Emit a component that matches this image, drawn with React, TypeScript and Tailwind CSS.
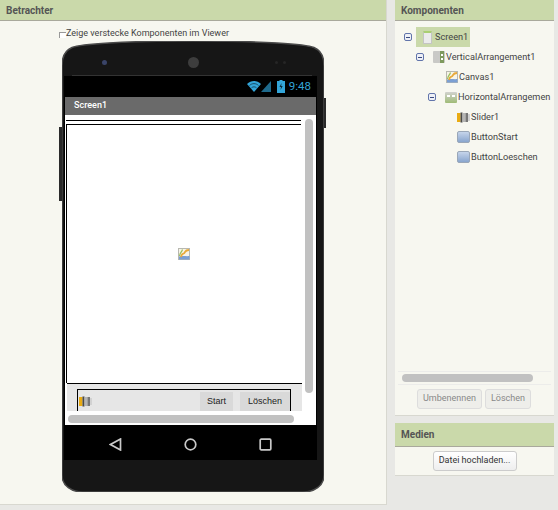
import React from "react";

const font = { fontFamily: '"Roboto","Liberation Sans",sans-serif' };
const arial = { fontFamily: '"Liberation Sans",Arial,sans-serif' };

function Minus() {
  return (
    <span className="flex h-[8px] w-[8px] items-center justify-center rounded-[2px] border border-[#6275ab] bg-[#eef0f6]">
      <span className="h-px w-[4px] bg-[#3a4a80]" />
    </span>
  );
}

function ButtonIcon() {
  return (
    <svg width="13" height="12" viewBox="0 0 13 12">
      <defs>
        <linearGradient id="bt" x1="0" y1="0" x2="0" y2="1">
          <stop offset="0" stopColor="#c9d7ec" />
          <stop offset="1" stopColor="#86a3cc" />
        </linearGradient>
      </defs>
      <rect x="0.5" y="0.5" width="12" height="11" rx="1.5" fill="url(#bt)" stroke="#9aa7b8" />
    </svg>
  );
}

function SliderIcon() {
  return (
    <svg width="13" height="11" viewBox="0 0 13 11">
      <rect x="0" y="1" width="3.5" height="9" fill="#e9ab12" />
      <rect x="3.5" y="0.5" width="2" height="10" fill="#4a4a4a" />
      <rect x="5.5" y="1" width="3" height="9" fill="#b5b5b5" />
      <rect x="8.5" y="1" width="2.5" height="9" fill="#777" />
      <rect x="11" y="2" width="2" height="7" fill="#d2d2d2" />
    </svg>
  );
}

function CanvasIcon() {
  return (
    <svg width="12" height="12" viewBox="0 0 12 12">
      <rect x="0.5" y="0.5" width="11" height="11" fill="#f7f4e8" stroke="#b8b8b0" />
      <path d="M1 11.5 V8.5 C5 7.5 8 8.5 11.5 8 V11.5Z" fill="#7b9fd3" />
      <path d="M3 9 C4 4 6 7 7 4 C8 2 9 2 11 2" fill="none" stroke="#e8a93a" strokeWidth="1.8" />
      <path d="M1.5 8 C2.5 3 3.5 5 4.5 1.5" fill="none" stroke="#9bbf5a" strokeWidth="1.2" />
    </svg>
  );
}

function ScreenIcon() {
  return (
    <span className="block h-[13px] w-[9px] rounded-[1px] border border-[#c4c4c4] border-t-[2px] border-t-[#a9cf72] bg-[#ebebeb]" />
  );
}

function VerticalIcon() {
  return (
    <span className="flex h-[12px] w-[12px] items-center justify-end rounded-[1px] bg-[#c9c9c6] pr-[1px]">
      <span className="flex h-full w-[4px] flex-col items-center justify-center gap-[2px] bg-[#7f9a5e]">
        <span className="h-[2px] w-[2px] bg-white" />
        <span className="h-[2px] w-[2px] bg-white" />
      </span>
    </span>
  );
}

function HorizontalIcon() {
  return (
    <span className="flex h-[11px] w-[12px] items-start justify-center gap-[2px] rounded-[1px] bg-gradient-to-b from-[#d2d2cf] to-[#9fbb76] pt-[3px]">
      <span className="h-[2px] w-[3px] bg-white" />
      <span className="h-[2px] w-[3px] bg-white" />
    </span>
  );
}

function Row({ indent, icon, label, minus }: { indent: number; icon: React.ReactNode; label: string; minus?: boolean }) {
  return (
    <div className="flex h-5 items-center whitespace-nowrap" style={{ paddingLeft: indent }}>
      <span className="flex w-[17px] shrink-0">{minus ? <Minus /> : null}</span>
      <span className="flex shrink-0">{icon}</span>
      <span className="ml-px text-[9.2px] leading-none text-[#444]">{label}</span>
    </div>
  );
}

function Header({ children, tall }: { children: React.ReactNode; tall?: boolean }) {
  return (
    <div
      className={`flex shrink-0 items-center border-b border-[#a9a99c] bg-[#cad9aa] pl-[6px] text-[10px] font-bold text-[#555] ${
        tall ? "h-[24px]" : "h-[21px]"
      }`}
    >
      {children}
    </div>
  );
}

function PhoneBody() {
  return (
    <svg className="absolute inset-0" width="262" height="451" viewBox="0 0 262 451">
      <path
        d="M0 25 C0 14 4 9 10 6.5 C18 3 60 0 131 0 C202 0 244 3 252 6.5 C258 9 262 14 262 25 V434 C262 445 252 451 241 451 H21 C10 451 0 445 0 434Z"
        fill="#161616"
        stroke="#4a4a4a"
        strokeWidth="1.5"
      />
      <path d="M10 34.5 H250" stroke="#333" strokeWidth="1" />
    </svg>
  );
}

function Phone() {
  return (
    <div className="relative flex h-[451px] w-[262px] flex-col">
      <PhoneBody />
      <div className="absolute top-[57px] right-[-2px] h-[30px] w-[2px] bg-[#2a2a2a]" />
      <div className="absolute top-[86px] left-[-3px] h-[74px] w-[3px] bg-[#2a2a2a]" />
      <div className="relative flex h-[35px] shrink-0 items-center pl-[40px]">
        <span className="mt-[7px] h-[5px] w-[5px] rounded-full bg-[#3a4468]" />
        <span className="ml-[81px] mt-[7px] h-[11px] w-[11px] rounded-full bg-[#3d3d3d]" />
        <span className="ml-[76px] mt-[7px] h-[3px] w-[3px] rounded-full bg-[#262626]" />
        <span className="ml-[5px] mt-[7px] h-[3px] w-[3px] rounded-full bg-[#262626]" />
      </div>
      <div className="relative ml-[2px] flex w-[253px] flex-col bg-black">
        <div className="flex h-[21px] items-center justify-end pr-[6px] text-[#33a5d9]">
          <svg width="25" height="13" viewBox="0 0 25 13">
            <path d="M0 4 C4 0 10 0 14 4 L7 12Z" fill="#33a5d9" />
            <path d="M2.5 5.5 C5 3 9 3 11.5 5.5" fill="none" stroke="#0b2a38" strokeWidth="0.7" />
            <path d="M4.5 7.8 C6 6.5 8 6.5 9.5 7.8" fill="none" stroke="#0b2a38" strokeWidth="0.7" />
            <path d="M24 1 V12 H14Z" fill="#1f6a8c" />
          </svg>
          <svg className="ml-[5px]" width="8" height="13" viewBox="0 0 8 13">
            <path d="M2.5 0 H5.5 V1 H8 V13 H0 V1 H2.5Z" fill="#33a5d9" />
            <path d="M4.5 3 L2.5 7 H4 L3.5 10 L5.7 6 H4.2Z" fill="#0b2a38" />
          </svg>
          <span className="ml-[4px] text-[11.5px] leading-none">9:48</span>
        </div>
        <div className="mx-[1px] flex h-[18px] items-center bg-[#6a6a6a] pl-[9px] text-[9px] font-medium text-white">Screen1</div>
        <div className="relative mx-[1px] flex h-[310px] flex-col bg-white pt-[5px] pl-[1px]">
          <div className="h-px w-[235px] bg-black" />
          <div className="mt-[3px] h-px w-[235px] bg-black" />
          <div className="flex h-[258px] w-[234px] items-center justify-center border-l border-black">
            <CanvasIcon />
          </div>
          <div className="ml-[1px] h-[28px] w-[235px] border-t border-black bg-[#e6e6e6] pt-[5px] pl-[10px]" style={arial}>
            <div className="flex h-[22px] w-[214px] items-start justify-between border-x border-t border-black pl-[1px]">
              <span className="mt-[6px] flex"><SliderIcon /></span>
              <div className="flex h-[21px] items-end gap-[7px]">
                <span className="flex h-[19px] w-[33px] items-center justify-center bg-[#d9d9d9] text-[9px] text-[#222]">Start</span>
                <span className="flex h-[19px] w-[50px] items-center justify-center bg-[#d9d9d9] text-[9px] text-[#222]">Löschen</span>
              </div>
            </div>
          </div>
          <div className="absolute top-[4px] right-[3px] h-[274px] w-[8px] rounded-full bg-[#c1c1c1]" />
          <div className="absolute bottom-[2px] left-[3px] h-[8px] w-[226px] rounded-full bg-[#c1c1c1]" />
        </div>
        <div className="flex h-[35px] items-center pl-[45px] pt-[3px]">
          <svg width="13" height="13" viewBox="0 0 13 13"><path d="M11.5 1 V12 L1.5 6.5Z" fill="none" stroke="#c9c9c9" strokeWidth="1.7" /></svg>
          <svg className="ml-[62px]" width="13" height="13" viewBox="0 0 13 13"><circle cx="6.5" cy="6.5" r="5.3" fill="none" stroke="#c9c9c9" strokeWidth="1.7" /></svg>
          <svg className="ml-[62px]" width="13" height="13" viewBox="0 0 13 13"><rect x="1.2" y="1.2" width="10.6" height="10.6" rx="1" fill="none" stroke="#c9c9c9" strokeWidth="1.7" /></svg>
        </div>
      </div>
    </div>
  );
}

export default function App() {
  return (
    <div className="flex h-[510px] w-[558px] items-start overflow-hidden bg-[#e8e8e5] text-[#444]" style={font}>
      <div className="flex h-[505px] w-[387px] shrink-0 flex-col border-r border-b border-[#d8d8d0] bg-[#f7f7f0]">
        <Header>Betrachter</Header>
        <div className="flex h-[20px] items-start pl-[59px] pt-[6px] text-[9px] leading-[12px] text-[#444]">
          <span className="mt-[5px] h-[6px] w-[7px] border-t border-l border-[#999] bg-white" />
          <span>Zeige verstecke Komponenten im Viewer</span>
        </div>
        <div className="ml-[62px] w-[262px]">
          <Phone />
        </div>
      </div>
      <div className="ml-[8px] flex w-[159px] shrink-0 flex-col">
        <div className="flex h-[416px] flex-col border-b border-[#d8d8d0] bg-[#f7f7f0]">
          <Header>Komponenten</Header>
          <div className="flex flex-1 flex-col overflow-hidden pt-[6px] pl-[9px]">
            <div className="flex h-5 items-center">
              <span className="flex w-[12px] shrink-0"><Minus /></span>
              <span className="flex h-5 w-[54px] items-center bg-[#cad9aa] pl-[7px]">
                <ScreenIcon />
                <span className="ml-[3px] text-[9.2px] leading-none text-[#444]">Screen1</span>
              </span>
            </div>
            <Row indent={12} minus label="VerticalArrangement1" icon={<VerticalIcon />} />
            <Row indent={25} label="Canvas1" icon={<CanvasIcon />} />
            <Row indent={24} minus label="HorizontalArrangemen" icon={<HorizontalIcon />} />
            <Row indent={36} label="Slider1" icon={<SliderIcon />} />
            <Row indent={36} label="ButtonStart" icon={<ButtonIcon />} />
            <Row indent={36} label="ButtonLoeschen" icon={<ButtonIcon />} />
          </div>
          <div className="ml-[3px] mr-[3px] border-y border-[#ececea] py-[2px]">
            <div className="ml-[4px] h-[8px] w-[131px] rounded-full bg-[#c1c1c1]" />
          </div>
          <div className="flex justify-center gap-[3px] pb-[6px] pt-[4px] pr-[1px]">
            <span className="flex h-[20px] w-[65px] items-center justify-center rounded-[3px] border border-[#ddd] bg-[#eeeeea] text-[9px] text-[#888]">Umbenennen</span>
            <span className="flex h-[20px] w-[46px] items-center justify-center rounded-[3px] border border-[#ddd] bg-[#eeeeea] text-[9px] text-[#888]">Löschen</span>
          </div>
        </div>
        <div className="mt-[7px] flex h-[53px] flex-col border-b border-[#d8d8d0] bg-[#f7f7f0]">
          <Header tall>Medien</Header>
          <div className="flex justify-center pt-[4px]">
            <span className="flex h-[20px] w-[84px] items-center justify-center rounded-[3px] border border-[#ccc] bg-gradient-to-b from-white to-[#eee] text-[9px] text-[#333]">Datei hochladen...</span>
          </div>
        </div>
      </div>
    </div>
  );
}
